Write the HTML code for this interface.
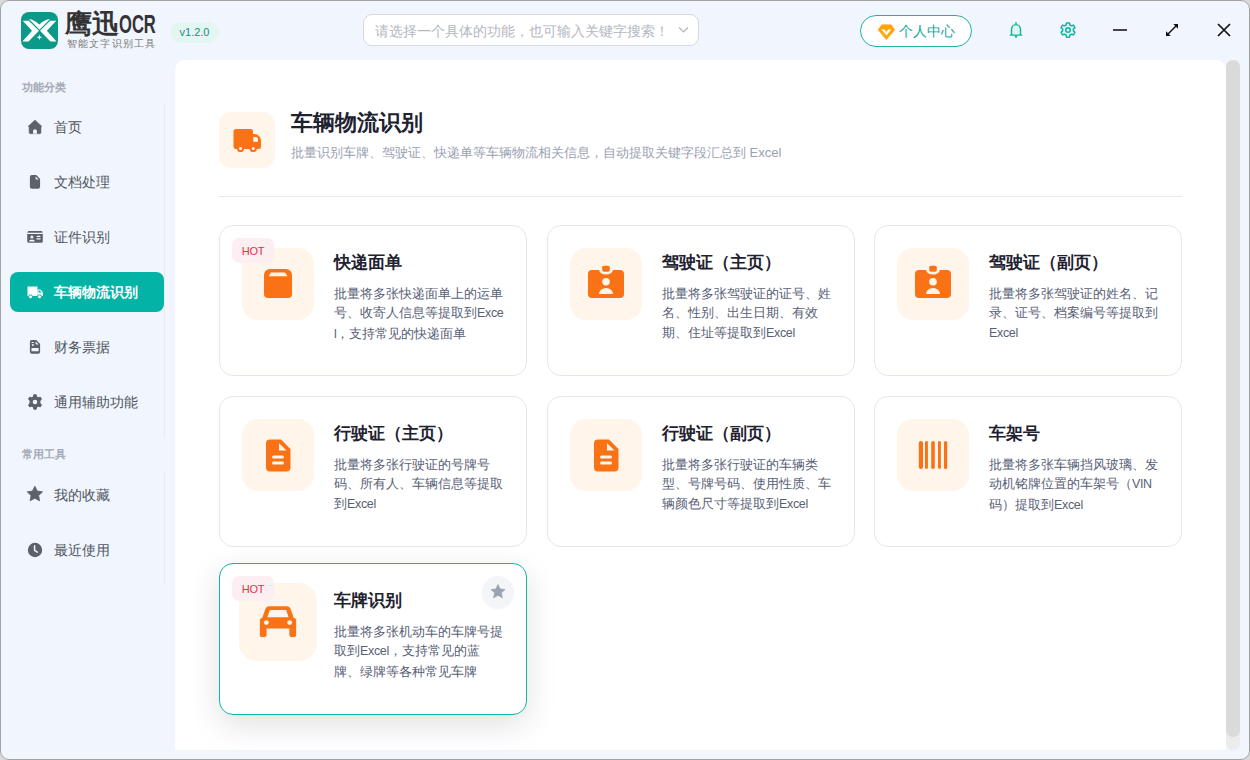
<!DOCTYPE html>
<html><head><meta charset="utf-8">
<style>
*{box-sizing:border-box;margin:0;padding:0}
html,body{width:1250px;height:760px;overflow:hidden;background:#d9d9d9;font-family:"Liberation Sans",sans-serif}
.win{position:absolute;left:0;top:0;width:1250px;height:760px;background:#f1f5fd;border-radius:9px;overflow:hidden}
.frame{position:absolute;left:0;top:0;width:1250px;height:760px;border:1px solid #a3a3a3;border-radius:9px;z-index:10}
.abs{position:absolute}
/* header */
.logo{left:21px;top:11.5px;width:37px;height:37px}
.brand{left:65px;top:9px;font-size:27px;font-weight:bold;color:#333;line-height:30px;white-space:nowrap}
.ocr{left:119px;top:8.5px;font-size:26.5px;font-weight:bold;color:#333;line-height:30px;white-space:nowrap;transform:scaleX(0.625);transform-origin:0 0}
.sub{left:67px;top:38px;font-size:10px;color:#777;letter-spacing:1.15px;line-height:12px;white-space:nowrap}
.ver{left:170px;top:22px;width:49px;height:21px;border-radius:11px;background:#e3f6f2;color:#1d8f88;font-size:11px;line-height:21px;text-align:center}
.search{left:363px;top:14px;width:336px;height:32px;border:1px solid #d5d8de;border-radius:9px;background:#fff}
.search span{position:absolute;left:11px;top:1px;line-height:30px;font-size:14px;color:#b4b8c0;white-space:nowrap}
.pc{left:860px;top:15px;width:112px;height:32px;border:1.5px solid #22b3a8;border-radius:17px;background:#fff}
.pc span{position:absolute;left:38px;top:0px;line-height:30px;font-size:14px;color:#12a89d;white-space:nowrap}
/* sidebar */
.cat{left:22px;font-size:11.2px;font-weight:bold;color:#a3a9b6;white-space:nowrap;line-height:14px}
.item{left:10px;width:154px;height:40px;border-radius:8px}
.item .ic{position:absolute;left:17px;top:12px;width:16px;height:16px}
.item span{position:absolute;left:43.5px;top:0;line-height:40px;font-size:14px;color:#4f5560;white-space:nowrap}
.item.act{background:#03b3a5}
.item.act span{color:#fff;font-weight:bold}
.vline{left:164px;width:1px;background:#ebeae8}
/* content */
.panel{left:175px;top:60px;width:1051px;height:690px;background:#fff;border-radius:10px 10px 0 0}
.scroll{left:1226px;top:60px;width:14px;height:690px;border-radius:7px;background:#ececec}
.thumb{left:1226px;top:60px;width:14px;height:677px;border-radius:7px;background:#dadada}
.hicon{left:219px;top:112px;width:56px;height:56px;border-radius:12px;background:#fff5eb}
.htitle{left:291px;top:107px;font-size:22px;font-weight:bold;color:#1e2230;line-height:32px;white-space:nowrap}
.hdesc{left:291px;top:143px;font-size:13px;color:#98a1b3;line-height:20px;white-space:nowrap}
.divider{left:219px;top:196px;width:963px;height:1px;background:#e6e9ee}
.card{width:308px;height:151px;border:1px solid #e3e7ee;border-radius:14px;background:#fff}
.card .ib{position:absolute;left:22px;top:22px;width:72px;height:72px;border-radius:16px;background:#fff5eb}
.card .ib svg{position:absolute}
.card .t{position:absolute;left:114px;top:24px;font-size:17px;font-weight:bold;color:#1e2230;line-height:26px;white-space:nowrap}
.card .d{position:absolute;left:114px;top:57.7px;font-size:13px;color:#576075;line-height:19.5px;white-space:nowrap}
.card .d i{font-style:normal;font-size:12.5px;letter-spacing:-0.35px}
.hot{position:absolute;left:12px;top:12px;width:42px;height:25px;border-radius:7px;background:#fdeff1;color:#e5304a;font-size:11px;line-height:27px;text-align:center;letter-spacing:-0.2px}
.card.hover{border-color:#12b4a6;height:152px;box-shadow:0 10px 32px rgba(0,0,0,0.12)}
.card.hover .ib{transform:scale(1.08)}
.star{position:absolute;right:12px;top:12px;width:32px;height:32px;border-radius:16px;background:#f3f5f9;box-shadow:0 1px 2px rgba(0,0,0,0.05)}
</style></head><body>
<div class="win">
  <!-- logo -->
  <svg class="abs logo" viewBox="0 0 37 37">
    <rect x="0" y="0" width="37" height="37" rx="8" fill="#0b9a8a"/>
    <path d="M1.7 8.7H7.8L17.9 18.8L7.5 29.5H1.4L11 18.8Z" fill="#fff"/>
    <path d="M35.2 8.7H29.1L19 18.8L29.4 29.5H35.5L25.9 18.8Z" fill="#fff"/>
    <path d="M8 7Q13 7.5 18.3 12.5Q23.5 7.5 29 7L18.5 17.8Z" fill="#fff"/>
    <path d="M18.4 22.5L19.1 24.6L21.2 25.3L19.1 26L18.4 28.1L17.7 26L15.6 25.3L17.7 24.6Z" fill="#fff"/>
  </svg>
  <div class="abs brand">鹰迅</div><div class="abs ocr">OCR</div>
  <div class="abs sub">智能文字识别工具</div>
  <div class="abs ver">v1.2.0</div>
  <div class="abs search"><span>请选择一个具体的功能，也可输入关键字搜索！</span>
    <svg class="abs" style="left:314px;top:11px" width="11" height="8" viewBox="0 0 11 8"><path d="M1 1.5L5.5 6L10 1.5" fill="none" stroke="#b0b4bb" stroke-width="1.2"/></svg>
  </div>
  <div class="abs pc">
    <svg class="abs" style="left:16.7px;top:9px;overflow:visible" width="18" height="16" viewBox="0 0 18 16"><path d="M3.9 -0.3H13.2L16.8 4.8L8.4 14.8L0 4.8Z" fill="#ffa50a" stroke="#ffa50a" stroke-width="0.5" stroke-linejoin="round"/><path d="M3.5 4.5L6.6 4.5L8.4 7.1L10.15 4.5L13.3 4.5L8.4 10.6Z" fill="#fff"/></svg>
    <span>个人中心</span>
  </div>
  <!-- bell -->
  <svg class="abs" style="left:1009px;top:21px" width="14" height="18" viewBox="0 0 14 18"><path d="M2.5 14V8.4A4.5 4.8 0 0 1 11.5 8.4V14Z" fill="#dff5f0"/><path d="M7 1.6V3M2.5 14V8.4A4.5 4.8 0 0 1 11.5 8.4V14M1.3 14.1H12.7" fill="none" stroke="#15b0a3" stroke-width="1.45" stroke-linecap="round"/><path d="M5.8 15.6L7 16.6L8.2 15.6Z" fill="#15b0a3" stroke="#15b0a3" stroke-width="0.9" stroke-linejoin="round"/></svg>
  <!-- gear -->
  <svg class="abs" style="left:1059px;top:21px" width="18" height="18" viewBox="0 0 24 24"><path d="M10 2.5H14L14.6 5.3L16.6 6.4L19.3 5.5L21.3 9L19.2 10.9V13.1L21.3 15L19.3 18.5L16.6 17.6L14.6 18.7L14 21.5H10L9.4 18.7L7.4 17.6L4.7 18.5L2.7 15L4.8 13.1V10.9L2.7 9L4.7 5.5L7.4 6.4L9.4 5.3Z" fill="#dff5f0" stroke="#15b0a3" stroke-width="2" stroke-linejoin="round"/><circle cx="12" cy="12" r="3" fill="none" stroke="#15b0a3" stroke-width="2"/></svg>
  <!-- min -->
  <div class="abs" style="left:1113px;top:29px;width:14px;height:2px;background:#444"></div>
  <!-- maximize -->
  <svg class="abs" style="left:1164px;top:22px" width="16" height="16" viewBox="0 0 16 16"><path d="M3.5 12.5L12.5 3.5" stroke="#111" stroke-width="1.5"/><path d="M9.3 2H14V6.7Z" fill="#111"/><path d="M6.7 14H2V9.3Z" fill="#111"/></svg>
  <!-- close -->
  <svg class="abs" style="left:1217px;top:23px" width="14" height="14" viewBox="0 0 14 14"><path d="M1 1L13 13M13 1L1 13" stroke="#111" stroke-width="1.7"/></svg>

  <!-- sidebar -->
  <div class="abs cat" style="top:80px">功能分类</div>
  <div class="abs vline" style="top:103px;height:334px"></div>
  <div class="abs vline" style="top:471px;height:114px"></div>
  <div class="abs item" style="top:107px"><svg class="ic" viewBox="0 0 16 16"><path d="M8 1.1L14.9 7.4L14 7.6V13.2A1.5 1.5 0 0 1 12.5 14.7H3.6A1.5 1.5 0 0 1 2.1 13.2V7.6L1 7.4Z" fill="#5d6168" stroke="#5d6168" stroke-width="0.5" stroke-linejoin="round"/><path d="M6.1 14.8V12.1A1.9 1.9 0 0 1 9.9 12.1V14.8Z" fill="#f1f5fd"/></svg><span>首页</span></div>
  <div class="abs item" style="top:162px"><svg class="ic" viewBox="0 0 16 16"><path d="M5 1.1H9.3L13.1 4.9V12.7A2 2 0 0 1 11.1 14.7H4.9A2 2 0 0 1 2.9 12.7V3.2A2 2 0 0 1 5 1.1Z" fill="#5d6168"/><path d="M8.6 2.6L11.6 5.6H9.6A1 1 0 0 1 8.6 4.6Z" fill="#f1f5fd"/></svg><span>文档处理</span></div>
  <div class="abs item" style="top:217px"><svg class="ic" viewBox="0 0 16 16"><path d="M1.2 2H14.8L15.8 3.8H0.2Z" fill="#5d6168"/><path d="M0.2 5H15.8V12.2A1.5 1.5 0 0 1 14.3 13.7H1.7A1.5 1.5 0 0 1 0.2 12.2Z" fill="#5d6168"/><circle cx="4.9" cy="7.9" r="1.5" fill="#f1f5fd"/><path d="M2.3 12.4V11.8A1.2 1.2 0 0 1 3.5 10.8H6.3A1.2 1.2 0 0 1 7.5 11.8V12.4Z" fill="#f1f5fd"/><rect x="9.6" y="6.8" width="3.9" height="1.2" rx="0.6" fill="#f1f5fd"/><rect x="9.6" y="9.2" width="3.9" height="1.3" fill="#f1f5fd"/></svg><span>证件识别</span></div>
  <div class="abs item act" style="top:272px"><svg class="ic" viewBox="0 0 16 16"><path d="M0.5 2.5H10.5V12H0.5Z" fill="#fff"/><path d="M10.5 5.5H13.5L16 8.5V12H10.5Z" fill="#fff"/><path d="M11.5 6.5H13L14.6 8.5H11.5Z" fill="#03b3a5"/><circle cx="3.5" cy="12.8" r="2" fill="#fff" stroke="#03b3a5" stroke-width="1"/><circle cx="12.5" cy="12.8" r="2" fill="#fff" stroke="#03b3a5" stroke-width="1"/></svg><span>车辆物流识别</span></div>
  <div class="abs item" style="top:327px"><svg class="ic" viewBox="0 0 16 16"><path d="M5 1.1H9.3L13.1 4.9V12.7A2 2 0 0 1 11.1 14.7H4.9A2 2 0 0 1 2.9 12.7V3.2A2 2 0 0 1 5 1.1Z" fill="#5d6168"/><path d="M8.6 2.6L11.6 5.6H9.6A1 1 0 0 1 8.6 4.6Z" fill="#f1f5fd"/><rect x="4.5" y="3" width="2.4" height="1.1" rx="0.5" fill="#f1f5fd"/><rect x="4.9" y="5.2" width="1.9" height="1.6" fill="#f1f5fd"/><rect x="4.5" y="9" width="7.1" height="3.3" rx="0.4" fill="#f1f5fd"/></svg><span>财务票据</span></div>
  <div class="abs item" style="top:382px"><svg class="ic" viewBox="0 0 16 16"><path d="M6.8 0.8H9.2L9.7 3L11.2 3.8L13.3 3.1L14.5 5.2L12.9 6.7V9.3L14.5 10.8L13.3 12.9L11.2 12.2L9.7 13L9.2 15.2H6.8L6.3 13L4.8 12.2L2.7 12.9L1.5 10.8L3.1 9.3V6.7L1.5 5.2L2.7 3.1L4.8 3.8L6.3 3Z" fill="#5d6168" stroke="#5d6168" stroke-width="1" stroke-linejoin="round"/><circle cx="8" cy="8" r="2.3" fill="#f1f5fd"/></svg><span>通用辅助功能</span></div>
  <div class="abs cat" style="top:447px">常用工具</div>
  <div class="abs item" style="top:475px"><svg class="ic" viewBox="0 0 16 16" style="overflow:visible"><path d="M7.85 -0.80L10.20 4.06L15.55 4.80L11.65 8.54L12.61 13.85L7.85 11.30L3.09 13.85L4.05 8.54L0.15 4.80L5.50 4.06Z" fill="#5d6168" stroke="#5d6168" stroke-width="0.8" stroke-linejoin="round"/></svg><span>我的收藏</span></div>
  <div class="abs item" style="top:530px"><svg class="ic" viewBox="0 0 16 16"><circle cx="8" cy="8" r="7.2" fill="#5d6168"/><path d="M7.6 3.8V8.4L10.3 10.2" fill="none" stroke="#f1f5fd" stroke-width="1.5" stroke-linecap="round"/></svg><span>最近使用</span></div>

  <!-- content -->
  <div class="abs panel"></div>
  <div class="abs scroll"></div>
  <div class="abs thumb"></div>
  <div class="abs hicon"><svg class="abs" style="left:0;top:0" width="56" height="56" viewBox="0 0 56 56"><path d="M17 17H31.5A2.5 2.5 0 0 1 34 19.5V22H35.5A6.5 6.5 0 0 1 42 28.5V34.5A2.5 2.5 0 0 1 39.5 37H17A2.5 2.5 0 0 1 14.5 34.5V19.5A2.5 2.5 0 0 1 17 17Z" fill="#f97316"/><path d="M34.3 25H36.5A2.5 2.5 0 0 1 39 27.5V29.8H34.3Z" fill="#fff5eb"/><circle cx="21.5" cy="36.4" r="3.6" fill="#f97316"/><circle cx="34.3" cy="36.4" r="3.6" fill="#f97316"/><circle cx="21.5" cy="36.4" r="1.5" fill="#fff5eb"/><circle cx="34.3" cy="36.4" r="1.5" fill="#fff5eb"/></svg></div>
  <div class="abs htitle">车辆物流识别</div>
  <div class="abs hdesc">批量识别车牌、驾驶证、快递单等车辆物流相关信息，自动提取关键字段汇总到 Excel</div>
  <div class="abs divider"></div>

  <!-- cards -->
  <div class="abs card" style="left:219px;top:225px">
    <div class="ib"><svg style="left:0;top:0" width="72" height="72" viewBox="0 0 72 72"><path d="M28 21H44A6 6 0 0 1 50 27V46A4 4 0 0 1 46 50H26A4 4 0 0 1 22 46V27A6 6 0 0 1 28 21Z" fill="#f97316"/><path d="M29 24.6H43L45.5 28.2H26.8Z" fill="#fff5eb"/></svg></div>
    <div class="hot">HOT</div>
    <div class="t">快递面单</div>
    <div class="d">批量将多张快递面单上的运单<br>号、收寄人信息等提取到<i>Exce</i><br><i>l</i>，支持常见的快递面单</div>
  </div>
  <div class="abs card" style="left:547px;top:225px">
    <div class="ib"><svg style="left:18px;top:17px" width="36" height="34" viewBox="0 0 36 34"><path d="M4 5H11.2A6.8 4.6 0 0 0 24.8 5H32A4 4 0 0 1 36 9V29A4 4 0 0 1 32 33H4A4 4 0 0 1 0 29V9A4 4 0 0 1 4 5Z" fill="#f97316"/><rect x="14.2" y="0.8" width="7.6" height="6" rx="1.8" fill="#f97316"/><circle cx="18" cy="16.7" r="3.8" fill="#fff5eb"/><path d="M11 29A7 6 0 0 1 25 29Z" fill="#fff5eb"/></svg></div>
    <div class="t">驾驶证（主页）</div>
    <div class="d">批量将多张驾驶证的证号、姓<br>名、性别、出生日期、有效<br>期、住址等提取到<i>Excel</i></div>
  </div>
  <div class="abs card" style="left:874px;top:225px">
    <div class="ib"><svg style="left:18px;top:17px" width="36" height="34" viewBox="0 0 36 34"><path d="M4 5H11.2A6.8 4.6 0 0 0 24.8 5H32A4 4 0 0 1 36 9V29A4 4 0 0 1 32 33H4A4 4 0 0 1 0 29V9A4 4 0 0 1 4 5Z" fill="#f97316"/><rect x="14.2" y="0.8" width="7.6" height="6" rx="1.8" fill="#f97316"/><circle cx="18" cy="16.7" r="3.8" fill="#fff5eb"/><path d="M11 29A7 6 0 0 1 25 29Z" fill="#fff5eb"/></svg></div>
    <div class="t">驾驶证（副页）</div>
    <div class="d">批量将多张驾驶证的姓名、记<br>录、证号、档案编号等提取到<br><i>Excel</i></div>
  </div>
  <div class="abs card" style="left:219px;top:396px">
    <div class="ib"><svg style="left:23.8px;top:19.7px" width="25" height="33" viewBox="0 0 25 33"><path d="M4 0.5H15L24.5 10V28.5A4 4 0 0 1 20.5 32.5H4A4 4 0 0 1 0 28.5V4.5A4 4 0 0 1 4 0.5Z" fill="#f97316"/><path d="M13 4.2V11.5H20.5Z" fill="#fff5eb"/><rect x="6" y="16.5" width="12" height="3" rx="1.5" fill="#fff5eb"/><rect x="6" y="22.5" width="12" height="3" rx="1.5" fill="#fff5eb"/></svg></div>
    <div class="t">行驶证（主页）</div>
    <div class="d">批量将多张行驶证的号牌号<br>码、所有人、车辆信息等提取<br>到<i>Excel</i></div>
  </div>
  <div class="abs card" style="left:547px;top:396px">
    <div class="ib"><svg style="left:23.8px;top:19.7px" width="25" height="33" viewBox="0 0 25 33"><path d="M4 0.5H15L24.5 10V28.5A4 4 0 0 1 20.5 32.5H4A4 4 0 0 1 0 28.5V4.5A4 4 0 0 1 4 0.5Z" fill="#f97316"/><path d="M13 4.2V11.5H20.5Z" fill="#fff5eb"/><rect x="6" y="16.5" width="12" height="3" rx="1.5" fill="#fff5eb"/><rect x="6" y="22.5" width="12" height="3" rx="1.5" fill="#fff5eb"/></svg></div>
    <div class="t">行驶证（副页）</div>
    <div class="d">批量将多张行驶证的车辆类<br>型、号牌号码、使用性质、车<br>辆颜色尺寸等提取到<i>Excel</i></div>
  </div>
  <div class="abs card" style="left:874px;top:396px">
    <div class="ib"><svg style="left:0;top:0" width="72" height="72" viewBox="0 0 72 72"><g fill="#f97316"><rect x="21.8" y="22" width="4.2" height="28" rx="2.1"/><rect x="28" y="22" width="2.9" height="28" rx="1.45"/><rect x="34.2" y="22" width="3.6" height="28" rx="1.8"/><rect x="41" y="22" width="2.9" height="28" rx="1.45"/><rect x="47" y="22" width="3.2" height="28" rx="1.6"/></g></svg></div>
    <div class="t">车架号</div>
    <div class="d">批量将多张车辆挡风玻璃、发<br>动机铭牌位置的车架号（<i>VIN</i><br>码）提取到<i>Excel</i></div>
  </div>
  <div class="abs card hover" style="left:219px;top:563px">
    <div class="ib"><svg style="left:19px;top:21px" width="34" height="30" viewBox="0 0 34 30"><path d="M9 0.5H25A4 4 0 0 1 28.8 3.2L31.5 11A3.5 3.5 0 0 1 34 14.5V21H0V14.5A3.5 3.5 0 0 1 2.5 11L5.2 3.2A4 4 0 0 1 9 0.5Z" fill="#f97316"/><path d="M9.5 4H24.5L26.8 10.5H7.2Z" fill="#fff5eb"/><circle cx="6.2" cy="15.5" r="2.2" fill="#fff5eb"/><circle cx="27.8" cy="15.5" r="2.2" fill="#fff5eb"/><rect x="0" y="19" width="6.5" height="10" rx="2.5" fill="#f97316"/><rect x="27.5" y="19" width="6.5" height="10" rx="2.5" fill="#f97316"/></svg></div>
    <div class="hot">HOT</div>
    <div class="t">车牌识别</div>
    <div class="d">批量将多张机动车的车牌号提<br>取到<i>Excel</i>，支持常见的蓝<br>牌、绿牌等各种常见车牌</div>
    <div class="star"><svg class="abs" style="left:8px;top:8px" width="16" height="15" viewBox="0 0 16 15"><path d="M8 0.5L10 5L15 5.5L11.3 8.8L12.4 13.8L8 11.3L3.6 13.8L4.7 8.8L1 5.5L6 5Z" fill="#9aa3b1" stroke="#9aa3b1" stroke-width="0.8" stroke-linejoin="round"/></svg></div>
  </div>
</div>
<div class="frame"></div>
</body></html>
